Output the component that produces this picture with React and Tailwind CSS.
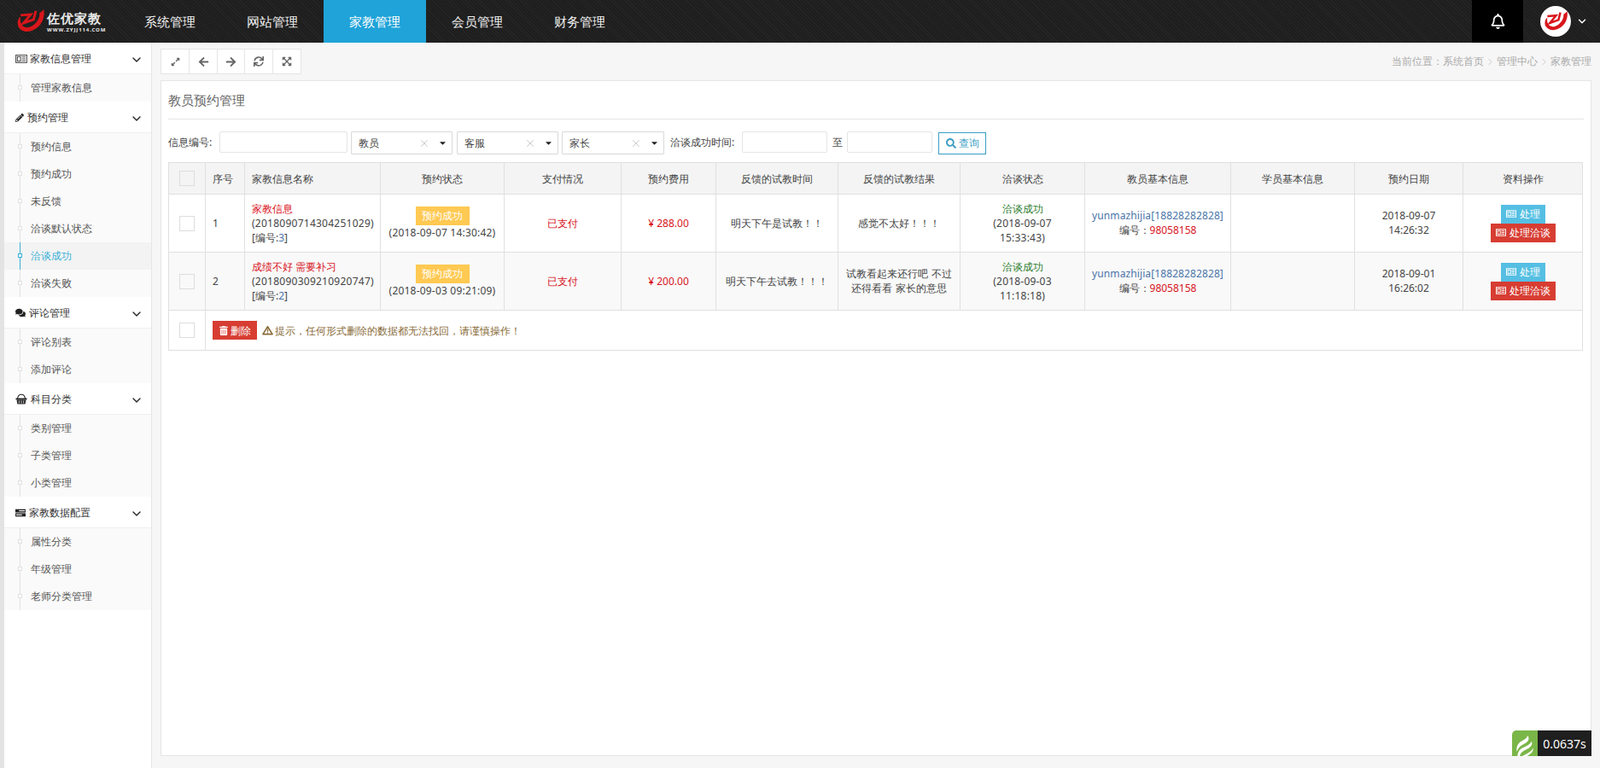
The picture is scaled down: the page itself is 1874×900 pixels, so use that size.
import React from "react";
import { FaPencilAlt, FaComments, FaExpandAlt, FaArrowLeft, FaArrowRight, FaSync, FaExpandArrowsAlt, FaSearch, FaTrashAlt, FaRegBell, FaCaretDown } from "react-icons/fa";
import { ChevronDown, ChevronRight, X } from "lucide-react";

const FONT = "font-['Noto_Sans','Noto_Sans_CJK_SC',sans-serif]";

function Swoosh({ className }) {
  return (
    <svg viewBox="0 0 40 36" className={className}>
      <path fill="none" stroke="#d8161b" strokeWidth="3.4" strokeLinejoin="miter" d="M6 9 L20 8 L10 20 L24 15 L27 3" />
      <path fill="#d8161b" d="M38 1 C40 12 35 23 26 28 C18 33 8 33 3 25 C1 20 2 14 6 11 C5 16 6 21 9 24 C14 27 18 26 23 23 C29 19 33 12 32 6 C34 5 36 3 38 1Z" />
    </svg>
  );
}

function Flame({ className }) {
  return (
    <svg viewBox="0 0 30 30" className={className}>
      <path fill="#fff" d="M19 2 C22 8 19 11 13 14 C9 16 6 19 4 24 C3 17 6 12 12 9 C16 7 18 5 19 2Z" />
      <path fill="#fff" d="M24 10 C26 15 23 18 17 21 C12 23 9 26 8 30 L5 30 C5 23 10 19 16 17 C20 15 23 13 24 10Z" />
      <path fill="#fff" d="M26 19 C27 24 23 27 18 30 L12 30 C16 27 24 25 26 19Z" />
    </svg>
  );
}

function News({ className }) {
  return (
    <svg viewBox="0 0 14 12" className={className} fill="none" stroke="currentColor" strokeWidth="1.1">
      <rect x="0.6" y="1.6" width="12.8" height="8.8" />
      <rect x="2.4" y="3.4" width="3.6" height="5.2" />
      <path d="M7.5 3.8H12M7.5 6H12M7.5 8.2H12" />
    </svg>
  );
}

function Basket({ className }) {
  return (
    <svg viewBox="0 0 14 13" className={className}>
      <path d="M2.5 6C3 3 5 1.2 7 1.2S11 3 11.5 6" fill="none" stroke="currentColor" strokeWidth="1.1" />
      <rect x="0.5" y="5.6" width="13" height="1.8" fill="currentColor" />
      <path d="M1.5 7.6H12.5L11.6 12.6H2.4Z" fill="currentColor" />
      <path d="M4.3 8.6V11.6M7 8.6V11.6M9.7 8.6V11.6" stroke="#fff" strokeWidth="0.8" />
    </svg>
  );
}

function Rack({ className }) {
  return (
    <svg viewBox="0 0 14 11" className={className}>
      <rect x="0" y="0.5" width="14" height="4.5" fill="currentColor" />
      <rect x="0" y="6" width="14" height="4.5" fill="currentColor" />
      <rect x="5" y="2" width="8" height="1.3" fill="#fff" />
      <rect x="1" y="7.6" width="8" height="1.3" fill="#fff" />
    </svg>
  );
}

function Warn({ className }) {
  return (
    <svg viewBox="0 0 14 12" className={className}>
      <path d="M7 1.4 L13 11 H1 Z" fill="none" stroke="currentColor" strokeWidth="1.7" strokeLinejoin="round" />
      <path d="M7 4.4V8M7 8.8V10" stroke="currentColor" strokeWidth="1.5" />
    </svg>
  );
}

const NAV = ["系统管理", "网站管理", "家教管理", "会员管理", "财务管理"];

const MENU = [
  { title: "家教信息管理", icon: <News className="block w-[14px] h-[12px] text-[#555]" />, gap: "mr-[3px]", items: ["管理家教信息"] },
  { title: "预约管理", icon: <FaPencilAlt className="block w-[10px] h-[10px]" />, gap: "mr-[4px]", items: ["预约信息", "预约成功", "未反馈", "洽谈默认状态", "洽谈成功", "洽谈失败"] },
  { title: "评论管理", icon: <FaComments className="block w-[12px] h-[11px]" />, gap: "mr-[4px]", items: ["评论别表", "添加评论"] },
  { title: "科目分类", icon: <Basket className="block w-[14px] h-[13px]" />, gap: "mr-[4px]", items: ["类别管理", "子类管理", "小类管理"] },
  { title: "家教数据配置", icon: <Rack className="block w-[12px] h-[10px]" />, gap: "mr-[4px]", items: ["属性分类", "年级管理", "老师分类管理"] },
];

function Sidebar() {
  return (
    <aside className="w-[178px] shrink-0 bg-[#e3e3e3] pl-[5px]">
      <div className="h-full bg-white border-r border-[#e6e6e6]">
        {MENU.map((g) => (
          <div key={g.title}>
            <div className="h-[37px] flex items-center pl-[13px] pr-[9px] border-b border-[#f0f0f0] text-[12px] text-[#333]">
              <span className={`${g.gap} text-[#222] pt-[1px]`}>{g.icon}</span>
              <span className="flex-1 pt-[2px]">{g.title}</span>
              <ChevronDown className="w-[16px] h-[16px] text-[#222] mt-[3px]" strokeWidth={2} />
            </div>
            <div className="bg-[#fafafa]">
              {g.items.map((it) => {
                const active = it === "洽谈成功";
                return (
                  <div key={it} className={`relative h-[32px] flex items-center pl-[31px] text-[12px] ${active ? "bg-[#f3f3f3] text-[#3ab0d8]" : "text-[#555]"}`}>
                    <span className={`absolute left-[18px] top-0 bottom-0 w-px ${active ? "bg-[#3ab0d8]" : "bg-[#e2e2e2]"}`} />
                    <span className={`absolute left-[16px] top-[13px] w-[5px] h-[5px] border bg-white ${active ? "border-[#3ab0d8]" : "border-[#e2e2e2]"}`} />
                    {it}
                  </div>
                );
              })}
            </div>
          </div>
        ))}
      </div>
    </aside>
  );
}

const Field = ({ w }) => <input className={`${w} h-[25px] bg-white border border-[#e5e5e5] rounded-[2px] outline-none`} />;

function Pick({ label, w }) {
  return (
    <div className={`${w} h-[27px] border border-[#d9d9d9] bg-white rounded-[1px] flex items-center pl-[8px] text-[12px] text-[#444]`}>
      <span className="flex-1">{label}</span>
      <X className="w-[14px] h-[14px] text-[#c4c4c4] mr-[9px]" strokeWidth={1.5} />
      <FaCaretDown className="w-[11px] h-[11px] text-[#222] mr-[5px]" />
    </div>
  );
}

const COLS = ["w-[43px]", "w-[46px]", "w-[159px]", "w-[145px]", "w-[137px]", "w-[111px]", "w-[143px]", "w-[143px]", "w-[146px]", "w-[171px]", "w-[145px]", "w-[127px]", "w-[140px]"];
const HEAD = ["序号", "家教信息名称", "预约状态", "支付情况", "预约费用", "反馈的试教时间", "反馈的试教结果", "洽谈状态", "教员基本信息", "学员基本信息", "预约日期", "资料操作"];

const ROWS = [
  { n: 1, name: "家教信息", code: "(2018090714304251029)", id: 3, time: "(2018-09-07 14:30:42)", fee: "¥ 288.00", t1: "明天下午是试教！！", t2: ["感觉不太好！！！"], d: "2018-09-07", h: "15:33:43", date: "2018-09-07", hour: "14:26:32" },
  { n: 2, name: "成绩不好 需要补习", code: "(2018090309210920747)", id: 2, time: "(2018-09-03 09:21:09)", fee: "¥ 200.00", t1: "明天下午去试教！！！", t2: ["试教看起来还行吧 不过", "还得看看 家长的意思"], d: "2018-09-03", h: "11:18:18", date: "2018-09-01", hour: "16:26:02" },
];

const Box = ({ fill }) => <span className={`block w-[18px] h-[18px] mx-auto border border-[#ddd] ${fill}`} />;
const TD = "border border-[#e0e0e0] px-[8px] text-center align-middle";

function Table() {
  return (
    <table className="w-[1657px] table-fixed border-collapse text-[12px] leading-[17px] text-[#444]">
      <colgroup>{COLS.map((c, i) => <col key={i} className={c} />)}</colgroup>
      <thead>
        <tr className="h-[37px] bg-[#f4f4f4]">
          <th className={`${TD} font-normal`}><Box fill="bg-[#f4f4f4]" /></th>
          {HEAD.map((h, i) => (
            <th key={h} className={`${TD} font-normal ${i < 2 ? "!text-left" : ""}`}>{h}</th>
          ))}
        </tr>
      </thead>
      <tbody>
        {ROWS.map((r) => (
          <tr key={r.n} className={`h-[68px] ${r.n === 2 ? "bg-[#f9f9f9]" : "bg-white"}`}>
            <td className={TD}><Box fill={r.n === 2 ? "bg-[#f9f9f9]" : "bg-white"} /></td>
            <td className={`${TD} !text-left`}>{r.n}</td>
            <td className={`${TD} !text-left whitespace-nowrap`}>
              <div className="text-[#d8141c]">{r.name}</div>
              <div className="tracking-[0.25px]">{r.code}</div>
              <div>[编号:<span className="text-[#4a74a8]">{r.id}</span>]</div>
            </td>
            <td className={`${TD} !px-0`}>
              <span className="inline-block w-[63px] h-[22px] leading-[22px] bg-[#ffc952] text-white">预约成功</span>
              <div className="tracking-[0.2px]">{r.time}</div>
            </td>
            <td className={`${TD} text-[#d8141c]`}>已支付</td>
            <td className={`${TD} text-[#d8141c]`}>{r.fee}</td>
            <td className={`${TD} !px-0`}>{r.t1}</td>
            <td className={`${TD} !px-0 ${r.t2.length > 1 ? "!pb-[2px]" : ""}`}>{r.t2.map((l) => <div key={l}>{l}</div>)}</td>
            <td className={TD}>
              <div className="text-[#2d7d2d]">洽谈成功</div>
              <div className="tracking-[0.2px]">({r.d}</div>
              <div className="tracking-[0.2px]">{r.h})</div>
            </td>
            <td className={`${TD} !px-0 !pb-[2px]`}>
              <div className="text-[#4a74a8] tracking-[0.1px]">yunmazhijia[18828282828]</div>
              <div>编号：<span className="text-[#d8141c]">98058158</span></div>
            </td>
            <td className={TD} />
            <td className={`${TD} !pb-[2px]`}><div>{r.date}</div><div>{r.hour}</div></td>
            <td className={`${TD} !px-0`}>
              <div className="flex flex-col items-center text-white">
                <span className="w-[52px] h-[22px] bg-[#55bfe3] flex items-center justify-center gap-[4px]"><News className="w-[12px] h-[11px]" />处理</span>
                <span className="w-[76px] h-[22px] bg-[#d73d32] flex items-center justify-center gap-[4px]"><News className="w-[12px] h-[11px]" />处理洽谈</span>
              </div>
            </td>
          </tr>
        ))}
        <tr className="h-[47px]">
          <td className={TD}><Box fill="bg-white" /></td>
          <td className={`${TD} !text-left`} colSpan={12}>
            <div className="flex items-center">
              <span className="w-[52px] h-[22px] bg-[#d73d32] text-white flex items-center justify-center gap-[3px]"><FaTrashAlt className="w-[10px] h-[11px]" />删除</span>
              <Warn className="w-[13px] h-[12px] ml-[6px] mr-[2px] text-[#8a6d3b]" />
              <span className="text-[#8a6d3b]">提示，任何形式删除的数据都无法找回，请谨慎操作！</span>
            </div>
          </td>
        </tr>
      </tbody>
    </table>
  );
}

const TOOLS = [
  { w: "w-[32px]", icon: <FaExpandAlt className="w-[11px] h-[11px]" /> },
  { w: "w-[33px]", icon: <FaArrowLeft className="w-[13px] h-[13px]" /> },
  { w: "w-[32px]", icon: <FaArrowRight className="w-[13px] h-[13px]" /> },
  { w: "w-[33px]", icon: <FaSync className="w-[12px] h-[12px]" /> },
  { w: "w-[33px]", icon: <FaExpandArrowsAlt className="w-[12px] h-[12px]" /> },
];

export default function App() {
  return (
    <div className={`h-[900px] w-full flex flex-col overflow-hidden ${FONT}`}>
      <header className="h-[50px] shrink-0 flex items-stretch bg-[#212121] bg-[repeating-linear-gradient(45deg,#252525_0,#252525_1px,#1e1e1e_1px,#1e1e1e_3px)]">
        <div className="w-[139px] shrink-0 flex items-center pl-[19px]">
          <Swoosh className="w-[34px] h-[31px] mr-[2px]" />
          <div className="flex flex-col text-[#e8e8e8] font-['Liberation_Serif','Noto_Sans_CJK_SC',serif]">
            <span className="text-[15px] leading-[18px] font-bold tracking-[1px] font-['Noto_Sans_CJK_SC',serif]">佐优家教</span>
            <span className="text-[6px] leading-[8px] font-bold tracking-[0.9px] mt-[1px] whitespace-nowrap">WWW.ZYJJ114.COM</span>
          </div>
        </div>
        {NAV.map((n, i) => (
          <div key={n} className={`w-[120px] flex items-center justify-center text-[15px] ${i === 2 ? "bg-[#1fa3d8] text-white" : "text-[#f0f0f0]"}`}>{n}</div>
        ))}
        <div className="flex-1" />
        <div className="w-[60px] bg-black flex items-center justify-center text-white"><FaRegBell className="w-[17px] h-[18px]" /></div>
        <div className="w-[90px] flex items-center pl-[20px]">
          <div className="w-[36px] h-[36px] rounded-full bg-white flex items-center justify-center"><Swoosh className="w-[29px] h-[27px]" /></div>
          <ChevronDown className="w-[14px] h-[14px] ml-[6px] text-white" strokeWidth={2.5} />
        </div>
      </header>
      <div className="flex-1 flex min-h-0">
        <Sidebar />
        <main className="flex-1 min-w-0 bg-[#f6f6f6] pl-[10px] pr-[10px] pt-[7px] pb-[14px] flex flex-col">
          <div className="h-[30px] flex items-center justify-between shrink-0">
            <div className="flex bg-white border border-[#e5e5e5]">
              {TOOLS.map((t, i) => (
                <span key={i} className={`${t.w} h-[28px] flex items-center justify-center text-[#666] ${i ? "border-l border-[#e5e5e5]" : ""}`}>{t.icon}</span>
              ))}
            </div>
            <div className="flex items-center text-[12px] text-[#aaa]">
              <span>当前位置：系统首页</span>
              <ChevronRight className="w-[13px] h-[13px] mx-[1px]" strokeWidth={1} />
              <span>管理中心</span>
              <ChevronRight className="w-[13px] h-[13px] mx-[1px]" strokeWidth={1} />
              <span>家教管理</span>
            </div>
          </div>
          <section className="relative mt-[7px] flex-1 bg-white border border-[#e5e5e5] px-[8px] pb-[8px]">
            <div className="h-[45px] flex items-center border-b border-[#e5e5e5] text-[15px] text-[#666]">教员预约管理</div>
            <div className="mt-[14px] h-[27px] flex items-start text-[12px] text-[#444]">
              <span className="w-[60px] h-[25px] flex items-center">信息编号:</span>
              <Field w="w-[150px]" />
              <div className="ml-[4px]"><Pick label="教员" w="w-[119px]" /></div>
              <div className="ml-[5px]"><Pick label="客服" w="w-[119px]" /></div>
              <div className="ml-[4px]"><Pick label="家长" w="w-[120px]" /></div>
              <span className="ml-[7px] w-[84px] h-[25px] flex items-center">洽谈成功时间:</span>
              <Field w="w-[100px]" />
              <span className="w-[23px] h-[25px] flex items-center justify-center">至</span>
              <Field w="w-[100px]" />
              <span className="ml-[7px] mt-[1px] w-[56px] h-[26px] border border-[#3a9dc5] flex items-center justify-center gap-[3px] text-[#3a9dc5]"><FaSearch className="w-[12px] h-[12px]" />查询</span>
            </div>
            <div className="mt-[9px]"><Table /></div>
            <div className="absolute right-[-1px] bottom-[-1px] flex h-[30px]">
              <div className="w-[30px] bg-[#7ab648] rounded-tl-[5px] overflow-hidden flex items-end justify-center"><Flame className="w-[26px] h-[26px]" /></div>
              <div className="w-[63px] bg-[#1f1f1f] text-white text-[14px] flex items-center justify-center font-['Open_Sans',sans-serif]">0.0637s</div>
            </div>
          </section>
        </main>
      </div>
    </div>
  );
}
